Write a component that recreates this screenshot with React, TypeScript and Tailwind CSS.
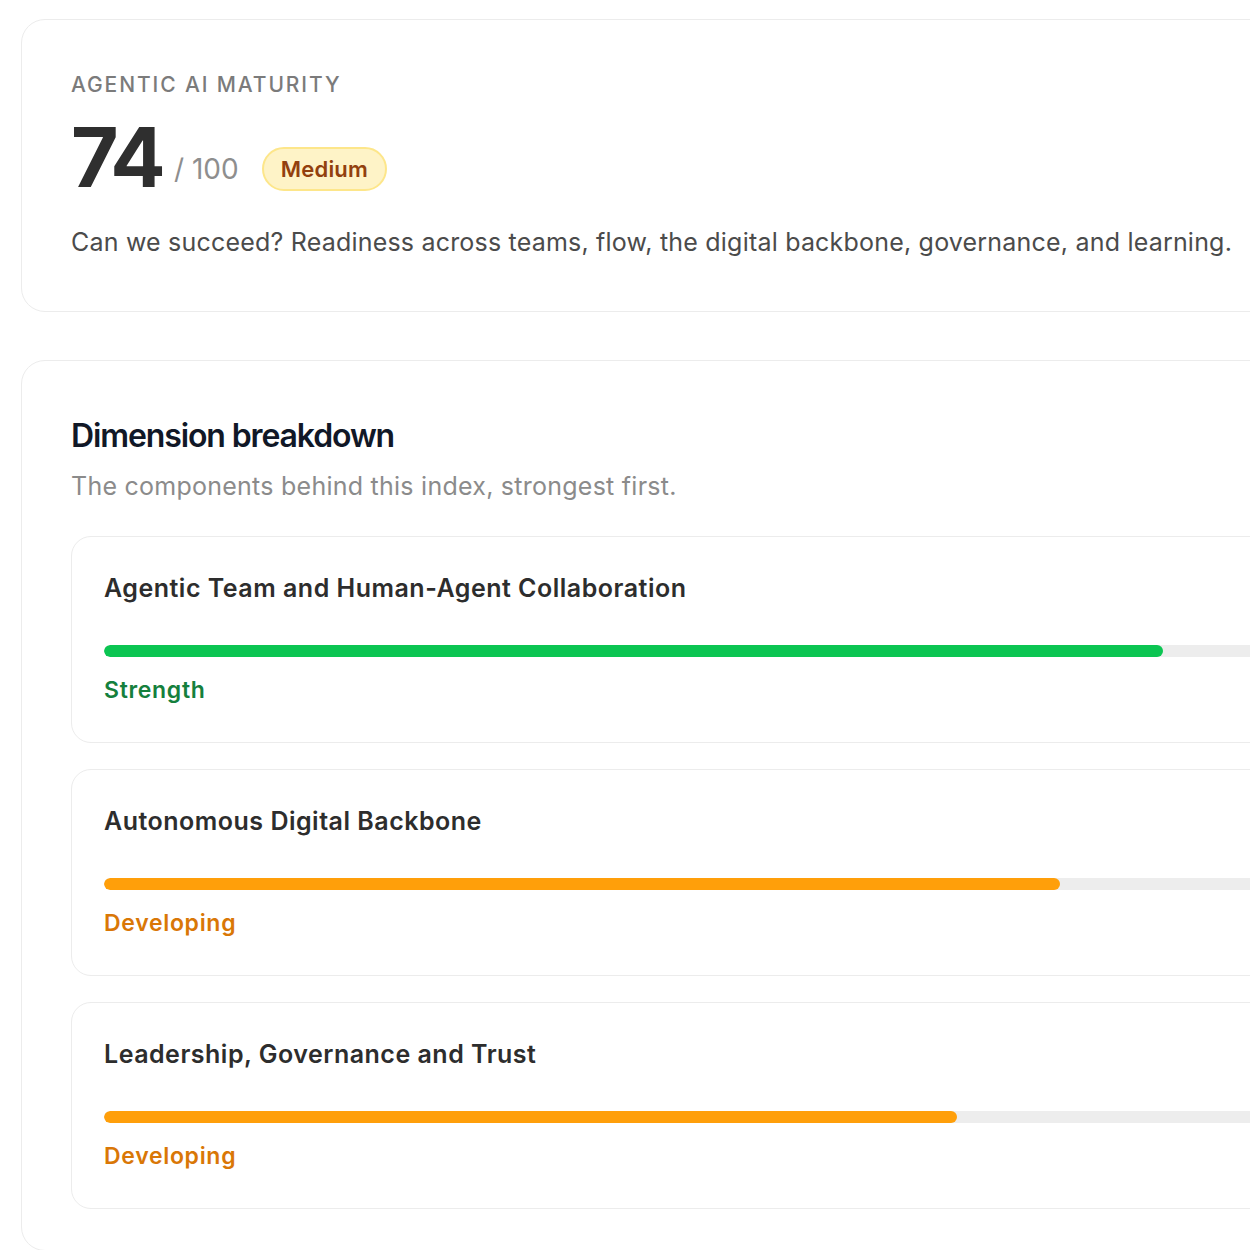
import React from "react";

const dims = [
  { name: "Agentic Team and Human-Agent Collaboration", score: 82, label: "Strength", bar: "bg-[#0bc552]", text: "text-[#15803d]" },
  { name: "Autonomous Digital Backbone", score: 74, label: "Developing", bar: "bg-[#ff9f0a]", text: "text-[#d97706]" },
  { name: "Leadership, Governance and Trust", score: 66, label: "Developing", bar: "bg-[#ff9f0a]", text: "text-[#d97706]" },
];

export default function App() {
  return (
    <div className="w-[1250px] overflow-hidden bg-white" style={{ fontFamily: "Inter, 'Noto Sans', sans-serif" }}>
      <div className="w-[1500px] pl-[21px] pr-[21px] pt-[19px] pb-[20px] flex flex-col gap-[48px]">
        <section className="rounded-3xl border border-[#ececec] bg-white pt-[51px] pb-[53px] px-[49px]">
          <div className="text-[21px] leading-[28px] font-medium tracking-[0.09em] text-[#7b7b7b] uppercase">Agentic AI Maturity</div>
          <div className="mt-[18px] flex items-center h-[82px]">
            <span className="text-[82px] leading-none font-bold tracking-[-0.045em] text-[#2f2f2f]">74</span>
            <div className="flex items-center mt-[22px]">
              <span className="ml-[12px] text-[28px] leading-none text-[#8e8e8e]">/ 100</span>
              <span className="ml-[23px] h-[44px] px-[17px] flex items-center rounded-full bg-[#fef3c7] border-2 border-[#fde68a] text-[22px] font-semibold tracking-[0.01em] text-[#92400e]">Medium</span>
            </div>
          </div>
          <p className="mt-[27px] text-[25px] leading-[32px] tracking-[0.008em] text-[#4b4b4b]">
            Can we succeed? Readiness across teams, flow, the digital backbone, governance, and learning.
          </p>
        </section>
        <section className="rounded-3xl border border-[#ececec] bg-white pt-[55px] pb-[41px] px-[49px]">
          <h2 className="text-[32px] leading-[40px] font-semibold tracking-[-0.035em] text-[#111827]">Dimension breakdown</h2>
          <p className="mt-[14px] text-[25px] leading-[32px] tracking-[0.01em] text-[#8b8b8b]">The components behind this index, strongest first.</p>
          <div className="mt-[34px] flex flex-col gap-[26px]">
            {dims.map((d) => (
              <div key={d.name} className="rounded-[20px] border border-[#ececec] bg-white pt-[35px] pb-[38px] px-[32px]">
                <div className="text-[25px] leading-[32px] font-semibold tracking-[0.02em] text-[#2d2d2d]">{d.name}</div>
                <div className="mt-[41px] h-[12px] rounded-full bg-[#ededed] overflow-hidden">
                  <div className={`h-full rounded-full ${d.bar}`} style={{ width: `${d.score}%` }} />
                </div>
                <div className={`mt-[19px] text-[23px] leading-[28px] font-semibold tracking-[0.03em] ${d.text}`}>{d.label}</div>
              </div>
            ))}
          </div>
        </section>
      </div>
    </div>
  );
}
